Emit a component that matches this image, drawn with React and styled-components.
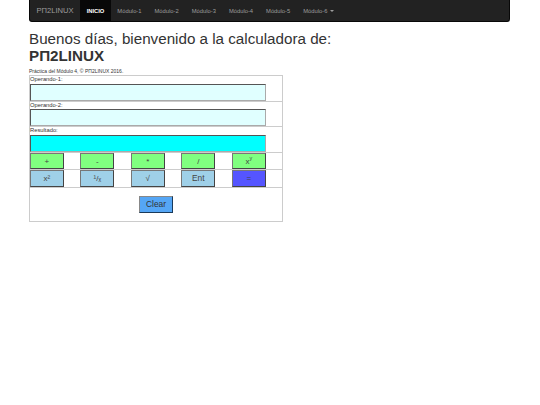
import React from 'react'
import styled, { createGlobalStyle } from 'styled-components'

const GlobalStyle = createGlobalStyle`
  html, body {
    margin: 0;
    padding: 0;
    background: #fff;
    font-family: "Liberation Sans", Arial, sans-serif;
    color: #333;
  }
`

const Page = styled.div`
  width: 481px;
  margin-left: 29px;
`

const Navbar = styled.nav`
  display: flex;
  align-items: stretch;
  height: 22px;
  background: #222;
  border: 1px solid #080808;
  border-top: 0;
  border-radius: 0 0 3px 3px;
  box-sizing: border-box;
`

const Brand = styled.a`
  display: flex;
  align-items: center;
  padding: 0 6.5px;
  font-size: 7.6px;
  color: #9d9d9d;
`

const NavItem = styled.a`
  display: flex;
  align-items: center;
  padding: 0 6.5px;
  font-size: 5.8px;
  color: ${p => (p.$active ? '#fff' : '#9d9d9d')};
  background: ${p => (p.$active ? '#080808' : 'transparent')};
  font-weight: ${p => (p.$active ? 700 : 400)};
`

const Caret = styled.span`
  width: 0;
  height: 0;
  margin-left: 3px;
  border-top: 2px solid #9d9d9d;
  border-left: 2px solid transparent;
  border-right: 2px solid transparent;
`

const Title = styled.h1`
  margin: 7.5px 0 0;
  font-size: 15.2px;
  font-weight: 400;
  line-height: 17px;
  color: #333;
`

const Brandline = styled.strong`
  display: block;
  font-weight: 700;
`

const Note = styled.p`
  margin: 4.5px 0 0;
  font-size: 5px;
  line-height: 6px;
  color: #333;
`

const Calc = styled.div`
  width: 254px;
  box-sizing: border-box;
  border: 1px solid #ccc;
  margin-top: 1px;
`

const Row = styled.div`
  border-bottom: 1px solid #ccc;
  &:last-child { border-bottom: 0; }
`

const Label = styled.label`
  display: block;
  font-size: 5.8px;
  line-height: 7.6px;
  color: #333;
`

const Field = styled.input`
  display: block;
  width: 236px;
  height: 17px;
  box-sizing: border-box;
  padding: 0;
  border-style: solid;
  border-width: 1px;
  border-color: #555 #aaa #aaa #555;
  background: ${p => (p.$result ? '#00ffff' : '#e0ffff')};
`

const KeyRow = styled(Row)`
  display: flex;
  gap: 16.9px;
  height: 16.4px;
`

const Key = styled.button`
  width: 33.6px;
  height: 16.6px;
  box-sizing: border-box;
  padding: 0;
  border-style: solid;
  border-width: 1px;
  border-color: #777 #444 #444 #777;
  font-family: inherit;
  font-size: ${p => (p.$big ? 8.4 : 8)}px;
  color: #444;
  background: ${p => p.$bg};

  sup {
    font-size: 5.4px;
    line-height: 0;
  }
`

const ClearRow = styled.div`
  display: flex;
  justify-content: center;
  height: 33px;
  padding-top: 8.2px;
  box-sizing: border-box;
`

const ClearButton = styled.button`
  width: 34px;
  height: 17px;
  box-sizing: border-box;
  padding: 0;
  border-style: solid;
  border-width: 1px;
  border-color: #888 #1a3a5a #1a3a5a #888;
  font-family: inherit;
  font-size: 8.4px;
  color: #333;
  background: #55a6f5;
`

const GREEN = '#80ff80'
const BLUE = '#9fd0e8'

const topKeys = ['+', '-', '*', '/']
const bottomKeys = ['x²', '¹/ₓ', '√', 'Ent']

export default function App () {
  return (
    <Page>
      <GlobalStyle />
      <Navbar>
        <Brand>PΠ2LINUX</Brand>
        <NavItem $active>INICIO</NavItem>
        <NavItem>Módulo-1</NavItem>
        <NavItem>Módulo-2</NavItem>
        <NavItem>Módulo-3</NavItem>
        <NavItem>Módulo-4</NavItem>
        <NavItem>Módulo-5</NavItem>
        <NavItem>Módulo-6<Caret /></NavItem>
      </Navbar>
      <Title>
        Buenos días, bienvenido a la calculadora de:
        <Brandline>PΠ2LINUX</Brandline>
      </Title>
      <Note>Práctica del Módulo 4, © PΠ2LINUX 2016.</Note>
      <Calc>
        <Row>
          <Label>Operando-1:</Label>
          <Field />
        </Row>
        <Row>
          <Label>Operando-2:</Label>
          <Field />
        </Row>
        <Row>
          <Label>Resultado:</Label>
          <Field $result />
        </Row>
        <KeyRow>
          {topKeys.map(k => <Key key={k} $bg={GREEN}>{k}</Key>)}
          <Key $bg={GREEN}>x<sup>y</sup></Key>
        </KeyRow>
        <KeyRow>
          {bottomKeys.map(k => <Key key={k} $bg={BLUE} $big={k === 'Ent'}>{k}</Key>)}
          <Key $bg='#5555ff'>=</Key>
        </KeyRow>
        <ClearRow>
          <ClearButton>Clear</ClearButton>
        </ClearRow>
      </Calc>
    </Page>
  )
}
